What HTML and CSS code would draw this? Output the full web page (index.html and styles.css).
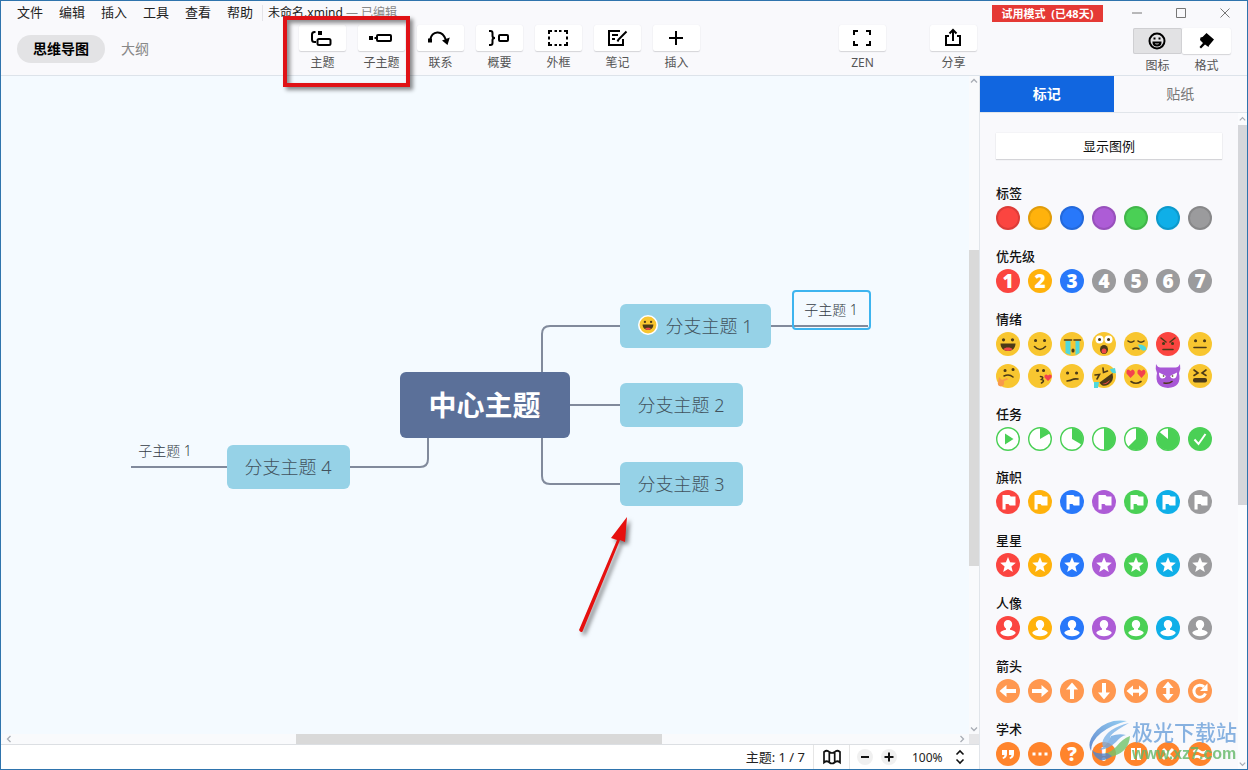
FILE: index.html
```
<!DOCTYPE html>
<html lang="zh-CN">
<head>
<meta charset="utf-8">
<title>未命名.xmind</title>
<link rel="stylesheet" href="styles.css">
</head>
<body>
<svg class="defs" aria-hidden="true">
  <symbol id="dot" viewBox="0 0 24 24"><circle cx="12" cy="12" r="12" fill="currentColor"/><circle cx="12" cy="12" r="11" fill="none" stroke="#000" stroke-opacity=".12" stroke-width="2"/></symbol>
  <symbol id="flag" viewBox="0 0 24 24"><circle cx="12" cy="12" r="12" fill="currentColor"/><path d="M6.500 5h7l1.200 1.600h4.800v8.900h-5.800l-1.200-1.600H9.600v5.600H6.500z" fill="#fff"/></symbol>
  <symbol id="star" viewBox="0 0 24 24"><circle cx="12" cy="12" r="12" fill="currentColor"/><path d="M12 4l2.100 5.300 5.700.4-4.400 3.700 1.400 5.500-4.800-3-4.800 3 1.400-5.500-4.400-3.700 5.700-.4z" fill="#fff"/></symbol>
  <symbol id="person" viewBox="0 0 24 24"><circle cx="12" cy="12" r="12" fill="currentColor"/><path d="M12 4c2.400 0 4.200 1.900 4.200 4.200 0 1.900-.9 3.500-2.200 4.400v1.200c3.200.4 5.200 1.600 5.800 3.200-1.800 2.300-4.600 3.300-7.800 3.300s-6-1-7.800-3.300c.6-1.600 2.600-2.800 5.800-3.200v-1.200c-1.300-.9-2.200-2.500-2.200-4.400C7.800 5.900 9.600 4 12 4z" fill="#fff"/></symbol>
  <symbol id="a-left" viewBox="0 0 24 24"><circle cx="12" cy="12" r="12" fill="currentColor"/><path d="M3.500 12l7-6v4H20v4h-9.500v4z" fill="#fff"/></symbol>
  <symbol id="a-both" viewBox="0 0 24 24"><circle cx="12" cy="12" r="12" fill="currentColor"/><path d="M2.500 12l6.500-5.500v3.700h6V6.500l6.500 5.500-6.500 5.500v-3.700H9v3.700z" fill="#fff"/></symbol>
  <symbol id="a-turn" viewBox="0 0 24 24"><circle cx="12" cy="12" r="12" fill="currentColor"/><path d="M17.500 14.500a6 6 0 1 1-1.500-6.700" fill="none" stroke="#fff" stroke-width="3"/><path d="M19.500 4.500V12H12z" fill="#fff"/></symbol>
  <symbol id="ring" viewBox="0 0 24 24"><circle cx="12" cy="12" r="11.300" fill="#fff" stroke="currentColor" stroke-width="1.400"/></symbol>
  <symbol id="face" viewBox="0 0 24 24"><circle cx="12" cy="12" r="12" fill="#f8c630"/></symbol>
  <symbol id="grin" viewBox="0 0 24 24"><circle cx="12" cy="12" r="12" fill="#f8c630"/><circle cx="7.500" cy="7.800" r="1.600" fill="#4b3a18"/><circle cx="16.500" cy="7.800" r="1.600" fill="#4b3a18"/><path d="M4.500 11.500h15c0 4.500-3 7.500-7.500 7.500s-7.500-3-7.500-7.500z" fill="#4b3a18"/><path d="M7.500 17.300c1-2.300 8-2.300 9 0-2.400 2.200-6.600 2.200-9 0z" fill="#f04848"/></symbol>
  <symbol id="chev" viewBox="0 0 10 10"><path d="M2 6.500l3-3 3 3" fill="none" stroke="#a8acb4" stroke-width="1.300"/></symbol>
</svg>

<div class="app">
  <header class="header">
    <div class="titlebar">
      <nav class="menu" aria-label="菜单">
        <button type="button">文件</button><button type="button">编辑</button><button type="button">插入</button><button type="button">工具</button><button type="button">查看</button><button type="button">帮助</button>
      </nav>
      <span class="doc-title">未命名.xmind <span class="doc-state">— 已编辑</span></span>
      <span class="trial">试用模式&nbsp; (已48天)</span>
      <div class="window-buttons">
        <button type="button" aria-label="最小化"><svg viewBox="0 0 12 12"><path d="M1 6h10" stroke="#777" fill="none"/></svg></button>
        <button type="button" aria-label="最大化"><svg viewBox="0 0 12 12"><path d="M1.500 1.500h9v9h-9z" stroke="#777" fill="none"/></svg></button>
        <button type="button" aria-label="关闭"><svg viewBox="0 0 12 12"><path d="M1.500 1.500l9 9m0-9l-9 9" stroke="#777" fill="none"/></svg></button>
      </div>
    </div>
    <div class="toolbar">
      <div class="views">
        <button type="button" class="view view-on">思维导图</button>
        <button type="button" class="view">大纲</button>
      </div>
      <div class="tools">
        <button type="button" class="tool"><span class="tool-box"><svg class="ico" viewBox="0 0 24 24"><path d="M5.500 6H4.500Q2 6 2 8.500v5Q2 16 4.500 16H6" /><rect x="7.500" y="13" width="13" height="6" rx="1.500"/><path class="solid" d="M8 5h4v4H8z"/></svg></span><span class="tool-name">主题</span></button>
        <button type="button" class="tool"><span class="tool-box"><svg class="ico" viewBox="0 0 24 24"><rect x="8" y="9" width="14" height="6" rx="1"/><path d="M5.500 12H8"/><path class="solid" d="M0 10h4v4H0z"/></svg></span><span class="tool-name">子主题</span></button>
        <button type="button" class="tool"><span class="tool-box"><svg class="ico" viewBox="0 0 24 24"><path d="M2 14C4 5 14 3 18 14"/><path class="solid" d="M0 12.500h4v4H0zM14 14.500l7.800-3-2.300 7.500z"/></svg></span><span class="tool-name">联系</span></button>
        <button type="button" class="tool"><span class="tool-box"><svg class="ico" viewBox="0 0 24 24"><path d="M2 5H3.500q2 0 2 2v3q0 2 2.500 2Q5.500 12 5.500 14v3q0 2-2 2H2"/><rect x="12" y="9" width="9" height="6" rx="1"/></svg></span><span class="tool-name">概要</span></button>
        <button type="button" class="tool"><span class="tool-box"><svg class="ico" viewBox="0 0 24 24"><path d="M3 8V5h3M8.500 5h2.500M13 5h2.500M18 5h3v3M21 10.500v3M21 16v3h-3M15.500 19H13M11 19H8.500M6 19H3v-3M3 13.500v-3"/></svg></span><span class="tool-name">外框</span></button>
        <button type="button" class="tool"><span class="tool-box"><svg class="ico" viewBox="0 0 24 24"><path d="M15 5H4v14h14v-6M7 9h6M7 13h3M21.500 5.500l-8 8-1 2"/></svg></span><span class="tool-name">笔记</span></button>
        <button type="button" class="tool"><span class="tool-box"><svg class="ico" viewBox="0 0 24 24"><path d="M12 5v14M5 12h14"/></svg></span><span class="tool-name">插入</span></button>
      </div>
      <div class="tools tools-end">
        <button type="button" class="tool"><span class="tool-box"><svg class="ico" viewBox="0 0 24 24"><path d="M4 9V5h4M16 5h4v4M20 15v4h-4M8 19H4v-4"/></svg></span><span class="tool-name">ZEN</span></button>
        <button type="button" class="tool"><span class="tool-box"><svg class="ico" viewBox="0 0 24 24"><path d="M8 10H5v9h14v-9h-3M12 15V5M8.500 7.500L12 4l3.500 3.500"/></svg></span><span class="tool-name">分享</span></button>
      </div>
      <div class="panels">
        <button type="button" class="panel-button"><span class="panel-box panel-on"><svg class="ico" viewBox="0 0 24 24"><circle cx="12" cy="12" r="7.500"/><path d="M8.500 13.500h7c0 4-7 4-7 0z"/><path class="solid" d="M8.500 8.500h2v2h-2zM13.500 8.500h2v2h-2z"/></svg></span><span class="tool-name">图标</span></button>
        <button type="button" class="panel-button"><span class="panel-box"><svg class="ico" viewBox="0 0 24 24"><path class="solid" d="M12.500 4l7.500 6.500-5 6-8-7zM6.500 8.500l2-.5 7 6.500-1 3.500-3.500-2.500-4 4-1.500-1.500 3.500-4-3-3z"/></svg></span><span class="tool-name">格式</span></button>
      </div>
    </div>
  </header>

  <div class="body">
    <main class="workspace">
      <div class="stage">
        <div class="canvas">
          <svg class="links" viewBox="0 0 960 650" aria-hidden="true">
            <path d="M541 300v-42q0-8 8-8h70M569 329h50M541 360v40q0 8 8 8h70M427 360v23q0 8-8 8h-70M226 391h-96M770 250h97"/>
          </svg>
          <div class="node center">中心主题</div>
          <div class="node branch b1"><svg class="node-mark" viewBox="-1 -1 26 26"><circle cx="12" cy="12" r="13" fill="#fff"/><circle cx="12" cy="12" r="11" fill="#f8c630"/><circle cx="8" cy="8" r="1.500" fill="#4b3a18"/><circle cx="16" cy="8" r="1.500" fill="#4b3a18"/><path d="M5 11.500h14c0 4.500-3 7-7 7s-7-2.500-7-7z" fill="#4b3a18"/><path d="M8 17c1-2 7-2 8 0-2 2-6 2-8 0z" fill="#f04848"/></svg>分支主题 1</div>
          <div class="node branch b2">分支主题 2</div>
          <div class="node branch b3">分支主题 3</div>
          <div class="node branch b4">分支主题 4</div>
          <div class="node leaf leaf-on">子主题 1</div>
          <div class="node leaf leaf-left">子主题 1</div>
          <svg class="pointer" viewBox="0 0 60 130" aria-hidden="true"><path d="M8 121L46 31l-6-2L56 8l-2 25-5-2L11.500 122.500q-2 1.500-3.500-1.500z"/></svg>
        </div>
        <div class="vbar"><svg class="chev"><use href="#chev"/></svg><div class="vthumb"></div><svg class="chev flip"><use href="#chev"/></svg></div>
      </div>
      <div class="hbar"><svg class="chev left"><use href="#chev"/></svg><div class="hthumb"></div><svg class="chev right"><use href="#chev"/></svg><div class="corner"></div></div>
      <footer class="status">
        <span class="count">主题: 1 / 7</span>
        <button type="button" class="map-button" aria-label="导航"><svg viewBox="0 0 20 16"><path d="M2 3q3-2.500 5.300 0Q10 5 12.700 3 15 .5 18 3v10.500q-3-2.500-5.300 0-2.700 2-5.400 0Q5 11 2 13.500zM7.300 3v10.500M12.700 3v10.500" fill="none" stroke="#111" stroke-width="1.700"/></svg></button>
        <div class="zoom">
          <button type="button" class="round" aria-label="缩小"><svg viewBox="0 0 16 16"><path d="M4 8h8" stroke="#111" stroke-width="2"/></svg></button>
          <button type="button" class="round" aria-label="放大"><svg viewBox="0 0 16 16"><path d="M3.500 8h9M8 3.500v9" stroke="#111" stroke-width="2"/></svg></button>
          <label class="zoom-level"><select aria-label="缩放比例"><option>100%</option></select><svg viewBox="0 0 10 16"><path d="M1.500 5.500L5 2l3.500 3.500M1.500 10.500L5 14l3.500-3.500" fill="none" stroke="#111" stroke-width="1.600"/></svg></label>
        </div>
      </footer>
    </main>

    <aside class="sidebar">
      <div class="tabs"><button type="button" class="tab tab-on">标记</button><button type="button" class="tab">贴纸</button></div>
      <div class="side-body">
        <div class="markers">
          <button type="button" class="legend">显示图例</button>
          <section><h2>标签</h2><div class="row">
            <button class="mk red" aria-label="红色标签"><svg><use href="#dot"/></svg></button><button class="mk amber" aria-label="黄色标签"><svg><use href="#dot"/></svg></button><button class="mk blue" aria-label="蓝色标签"><svg><use href="#dot"/></svg></button><button class="mk purple" aria-label="紫色标签"><svg><use href="#dot"/></svg></button><button class="mk green" aria-label="绿色标签"><svg><use href="#dot"/></svg></button><button class="mk cyan" aria-label="青色标签"><svg><use href="#dot"/></svg></button><button class="mk gray" aria-label="灰色标签"><svg><use href="#dot"/></svg></button>
          </div></section>
          <section><h2>优先级</h2><div class="row">
            <button class="mk num red"><span>1</span></button><button class="mk num amber"><span>2</span></button><button class="mk num blue"><span>3</span></button><button class="mk num gray"><span>4</span></button><button class="mk num gray"><span>5</span></button><button class="mk num gray"><span>6</span></button><button class="mk num gray"><span>7</span></button>
          </div></section>
          <section><h2>情绪</h2><div class="row">
            <button class="mk" aria-label="大笑"><svg><use href="#grin"/></svg></button>
            <button class="mk" aria-label="微笑"><svg><use href="#face"/><path class="ink eye" d="M7.500 8.500h.1M16.500 8.500h.1"/><path class="ink" d="M6.500 14.500q5.500 6 11 0"/></svg></button>
            <button class="mk" aria-label="大哭"><svg><use href="#face"/><path d="M5.500 9h5v14l-5-2zM15.500 9h4v12l-4 2z" fill="#4fd8dc"/><path class="ink" d="M4.500 8h7M14 8h6.500"/><path class="ink eye" d="M13 18v1"/></svg></button>
            <button class="mk" aria-label="惊讶"><svg><use href="#face"/><circle cx="7.500" cy="7.500" r="4" fill="#fff"/><circle cx="16.500" cy="7.500" r="4" fill="#fff"/><path class="ink eye" d="M7.500 7.500h.1M16.500 7.500h.1"/><ellipse cx="12" cy="17.500" rx="4" ry="4.500" fill="#4b3a18"/><ellipse cx="12" cy="19" rx="2.500" ry="2.500" fill="#f04848"/></svg></button>
            <button class="mk" aria-label="困倦"><svg><use href="#face"/><path class="ink" d="M4 9q3 2.500 6 0M14 9q3 2.500 6 0M9 17q3-2 6 0"/><path d="M14 12.500q8 0 8.500 5-4 3-7-1.500z" fill="#4fd8dc"/></svg></button>
            <button class="mk" aria-label="愤怒"><svg><circle cx="12" cy="12" r="12" fill="#fb4540"/><path class="ink" d="M5 6l5 4M19 6l-5 4M7 17.500h10"/><path class="ink eye" d="M7.500 11.500h.1M16.500 11.500h.1"/></svg></button>
            <button class="mk" aria-label="无语"><svg><use href="#face"/><path class="ink eye" d="M7.500 8.800h.1M16.500 8.800h.1"/><path class="ink" d="M6 15.500h12"/></svg></button>
            <button class="mk" aria-label="思考"><svg><use href="#face"/><path class="ink eye" d="M9 6.500h.1M17 5.500h.1"/><path class="ink" d="M8 12q5-2.500 9 1"/><path d="M3 13l3 3 5-2 1 1.500-4 1.500q1 5-3 5.500Q1 22 2 18z" fill="#f99a4a"/></svg></button>
            <button class="mk" aria-label="飞吻"><svg><use href="#face"/><path class="ink eye" d="M9.500 6.500h.1M15.500 6.500h.1"/><path class="ink" d="M12.500 12.500q4 .5 1 3 4 1 0 3.500"/><path d="M20 17l-3.500-3.500q-.5-3 2-3l1.500 1 1.500-1q3 0 2 3z" fill="#f3414e"/></svg></button>
            <button class="mk" aria-label="困惑"><svg><use href="#face"/><path class="ink eye" d="M7.500 9h.1M16.500 9h.1"/><path class="ink" d="M7 17q4-.5 5.500-1.500t5.500-.5"/></svg></button>
            <button class="mk" aria-label="笑哭"><svg><use href="#face"/><path class="ink" d="M3 11l4.500-.5L5 15M11 4l.5 4.500 4-1.500"/><path d="M20.500 9q2 8-4 11.500t-9-2z" fill="#4b3a18"/><path d="M10 20q5-1 8-4-2 5-8 4z" fill="#f04848"/><path d="M18 5l5-1 1 5q-5 1-6-4zM2 18l5 0-1 6H2z" fill="#4fd8dc"/></svg></button>
            <button class="mk" aria-label="喜爱"><svg><use href="#face"/><path d="M6.500 14L2.500 9.500q-.5-4 2-4L6.500 7l2-1.500q3 1 2 4.500zM17.500 14l-4-4.500q-.5-4 2-4l2 1.500 2-1.500q3 1 1.500 4.500z" fill="#f3414e"/><path class="ink" d="M7 17.500q5 3.500 10 0"/></svg></button>
            <button class="mk" aria-label="恶魔"><svg><path d="M0 0q2 4 5 3.500h14Q22 4 24 0q1 5-1 9 3 14-11 15Q-2 23 1 9-1 5 0 0z" fill="#a857d6"/><path d="M3 8.500l7 3.500q-1 3-4 2.500T3 8.500zM21 8.500L14 12q1 3 4 2.500t3-6z" fill="#fff"/><path class="ink" d="M7.500 12h.1M16.500 12h.1"/><path class="ink" d="M8 19q5 1 8-1.500"/></svg></button>
            <button class="mk" aria-label="痛苦"><svg><use href="#face"/><path class="ink" d="M6 6l4 3-4 2.500M18 6l-4 3 4 2.500"/><rect x="5" y="14" width="14" height="4.500" rx="2" fill="#4b3a18"/></svg></button>
          </div></section>
          <section><h2>任务</h2><div class="row">
            <button class="mk green" aria-label="开始"><svg><use href="#ring"/><path d="M9 6.500l8.500 5.500L9 17.500z" fill="currentColor"/></svg></button>
            <button class="mk green" aria-label="八分之一"><svg><use href="#ring"/><path d="M12 12V1a11 11 0 0 1 9.500 5.500z" fill="currentColor"/></svg></button>
            <button class="mk green" aria-label="四分之一"><svg><use href="#ring"/><path d="M12 12V1a11 11 0 0 1 9.500 16.500z" fill="currentColor"/></svg></button>
            <button class="mk green" aria-label="一半"><svg><use href="#ring"/><path d="M12 1a11 11 0 0 1 0 22z" fill="currentColor"/></svg></button>
            <button class="mk green" aria-label="八分之五"><svg><use href="#ring"/><path d="M12 12V1a11 11 0 1 1-7.800 18.800z" fill="currentColor"/></svg></button>
            <button class="mk green" aria-label="八分之七"><svg><use href="#ring"/><path d="M12 12V1A11 11 0 1 1 3.600 4.900z" fill="currentColor"/></svg></button>
            <button class="mk green" aria-label="完成"><svg><circle cx="12" cy="12" r="12" fill="currentColor"/><path d="M6.500 12.500l4 4.500L17.500 7" fill="none" stroke="#fff" stroke-width="2"/></svg></button>
          </div></section>
          <section><h2>旗帜</h2><div class="row">
            <button class="mk red" aria-label="红旗"><svg><use href="#flag"/></svg></button><button class="mk amber" aria-label="黄旗"><svg><use href="#flag"/></svg></button><button class="mk blue" aria-label="蓝旗"><svg><use href="#flag"/></svg></button><button class="mk purple" aria-label="紫旗"><svg><use href="#flag"/></svg></button><button class="mk green" aria-label="绿旗"><svg><use href="#flag"/></svg></button><button class="mk cyan" aria-label="青旗"><svg><use href="#flag"/></svg></button><button class="mk gray" aria-label="灰旗"><svg><use href="#flag"/></svg></button>
          </div></section>
          <section><h2>星星</h2><div class="row">
            <button class="mk red" aria-label="红星"><svg><use href="#star"/></svg></button><button class="mk amber" aria-label="黄星"><svg><use href="#star"/></svg></button><button class="mk blue" aria-label="蓝星"><svg><use href="#star"/></svg></button><button class="mk purple" aria-label="紫星"><svg><use href="#star"/></svg></button><button class="mk green" aria-label="绿星"><svg><use href="#star"/></svg></button><button class="mk cyan" aria-label="青星"><svg><use href="#star"/></svg></button><button class="mk gray" aria-label="灰星"><svg><use href="#star"/></svg></button>
          </div></section>
          <section><h2>人像</h2><div class="row">
            <button class="mk red" aria-label="红色人像"><svg><use href="#person"/></svg></button><button class="mk amber" aria-label="黄色人像"><svg><use href="#person"/></svg></button><button class="mk blue" aria-label="蓝色人像"><svg><use href="#person"/></svg></button><button class="mk purple" aria-label="紫色人像"><svg><use href="#person"/></svg></button><button class="mk green" aria-label="绿色人像"><svg><use href="#person"/></svg></button><button class="mk cyan" aria-label="青色人像"><svg><use href="#person"/></svg></button><button class="mk gray" aria-label="灰色人像"><svg><use href="#person"/></svg></button>
          </div></section>
          <section><h2>箭头</h2><div class="row">
            <button class="mk peach" aria-label="向左"><svg><use href="#a-left"/></svg></button><button class="mk peach" aria-label="向右"><svg class="turn-180"><use href="#a-left"/></svg></button><button class="mk peach" aria-label="向上"><svg class="turn-90"><use href="#a-left"/></svg></button><button class="mk peach" aria-label="向下"><svg class="turn-270"><use href="#a-left"/></svg></button><button class="mk peach" aria-label="左右"><svg><use href="#a-both"/></svg></button><button class="mk peach" aria-label="上下"><svg class="turn-90"><use href="#a-both"/></svg></button><button class="mk peach" aria-label="刷新"><svg><use href="#a-turn"/></svg></button>
          </div></section>
          <section><h2>学术</h2><div class="row">
            <button class="mk orange" aria-label="引用"><svg><circle cx="12" cy="12" r="12" fill="currentColor"/><path d="M6 8h5v4q0 4-4 5l-.5-1.500Q8.500 14.500 8.500 13H6zM13 8h5v4q0 4-4 5l-.5-1.500q2-1 2-2.500H13z" fill="#fff"/></svg></button>
            <button class="mk orange" aria-label="省略"><svg><circle cx="12" cy="12" r="12" fill="currentColor"/><path d="M4.500 10.500h3v3h-3zM10.500 10.500h3v3h-3zM16.500 10.500h3v3h-3z" fill="#fff"/></svg></button>
            <button class="mk num orange"><span>?</span></button>
            <button class="mk num orange"><span>!</span></button>
            <button class="mk orange" aria-label="暂停"><svg><circle cx="12" cy="12" r="12" fill="currentColor"/><path d="M7 6h4v12H7zM13 6h4v12h-4z" fill="#fff"/></svg></button>
            <button class="mk orange" aria-label="错误"><svg><circle cx="12" cy="12" r="12" fill="currentColor"/><path d="M7 7l10 10M17 7L7 17" stroke="#fff" stroke-width="3"/></svg></button>
            <button class="mk orange" aria-label="约等于"><svg><circle cx="12" cy="12" r="12" fill="currentColor"/><path d="M5.500 10q3-3 6.500-.5t6.500-.5M5.500 16q3-3 6.500-.5t6.500-.5" fill="none" stroke="#fff" stroke-width="2.500"/></svg></button>
          </div></section>
        </div>
        <div class="side-bar"><svg class="chev"><use href="#chev"/></svg><div class="side-thumb"></div><svg class="chev flip"><use href="#chev"/></svg></div>
      </div>
    </aside>
  </div>

  <div class="highlight"></div>
  <div class="watermark">
    <svg viewBox="0 0 42 44" aria-hidden="true"><defs><linearGradient id="wg" x1="0" y1="1" x2="1" y2="0"><stop offset="0" stop-color="#3e6fc4"/><stop offset="1" stop-color="#7cc4f0"/></linearGradient></defs><path d="M38 2Q20-1 8 11-3 23 2 32q0-10 10-18T38 2z" fill="url(#wg)"/><path d="M40 4Q19 9 14 21q-2 6 2 9 2-6 7-10Q15 18 40 4z" fill="#7db4e8"/><path d="M22 17q8-3 15-1Q32 17 27 23q-7 7-17 8 9-5 12-14z" fill="#6fa8e2"/><path d="M41 17q-1 15-16 20-9 3-16-1 10 0 18-8Q33 20 41 17z" fill="#72c46c"/><path d="M3 31q5 5 15 3l5 3q-6 5-12 4-6-3-8-10z" fill="#4e86cf"/></svg>
    <div><div class="wm-name">极光下载站</div><div class="wm-url">www.xz7.com</div></div>
  </div>
</div>
</body>
</html>
```
FILE: styles.css
```
* { box-sizing: border-box; }
body {
  margin: 0;
  font-family: "Noto Sans", "Noto Sans CJK SC", sans-serif;
  font-size: 13px;
  color: #222;
}
button, select {
  margin: 0;
  padding: 0;
  border: 0;
  background: none;
  font: inherit;
  color: inherit;
}
svg { display: block; }
.defs { position: absolute; width: 0; height: 0; }

.app {
  position: relative;
  display: flex;
  flex-direction: column;
  height: 100vh;
  border: 1px solid #2f74ad;
  background: #f9f9fc;
  overflow: hidden;
}

/* Header */
.header { border-bottom: 1px solid #dde3ea; }
.titlebar { display: flex; height: 24px; padding-left: 16px; }
.menu { display: flex; gap: 16px; padding-right: 9px; }
.menu button { height: 22px; line-height: 20px; }
.doc-title {
  align-self: flex-start;
  margin-top: 4px;
  line-height: 16px;
  font-size: 12px;
  padding-left: 5px;
  border-left: 1px solid #e3e3e8;
}
.doc-state { color: #888; }
.trial {
  margin: 4px 28px 0 auto;
  width: 111px;
  height: 17px;
  background: #e53935;
  color: #fff;
  font-size: 11px;
  font-weight: 700;
  line-height: 17px;
  text-align: center;
}
.window-buttons { display: flex; gap: 32px; padding-right: 16px; }
.window-buttons svg { width: 12px; height: 12px; }
.toolbar { display: flex; align-items: flex-start; height: 50px; padding: 0 16px; }
.views { display: flex; gap: 16px; padding-top: 10px; width: 282px; }
.view { height: 28px; padding-bottom: 2px; font-size: 14px; color: #888; }
.view-on {
  width: 88px;
  border-radius: 14px;
  background: #e3e3e5;
  color: #000;
  font-weight: 700;
}
.tools { display: flex; gap: 12px; }
.tools-end { gap: 44px; margin-left: auto; }
.tool { width: 47px; }
.tool-box, .panel-box {
  display: flex;
  align-items: center;
  height: 26px;
  padding-left: 11px;
  background: #fff;
  border-radius: 2px;
  box-shadow: 0 1px 1px #d4d4d8, 0 0 1px #e4e4e8;
}
.panel-box { padding-left: 12px; }
.tool-name {
  display: block;
  margin-top: 4px;
  font-size: 12px;
  line-height: 16px;
  color: #555;
  white-space: nowrap;
}
.ico { width: 24px; height: 24px; fill: none; stroke: #000; stroke-width: 2; }
.solid { fill: #000; stroke: none; }
.panels { display: flex; margin-left: 156px; padding-top: 3px; }
.panel-button { width: 49px; }
.panel-on { background: #e2e2e4; box-shadow: inset 0 0 0 1px #cfcfd2; }

/* Workspace */
.body { display: flex; flex: 1; min-height: 0; }
.workspace { flex: 1; min-width: 0; display: flex; flex-direction: column; }
.stage { flex: 1; min-height: 0; display: flex; }
.canvas { position: relative; flex: 1; min-width: 0; overflow: hidden; background: #f4faff; }
.chev { width: 10px; height: 10px; flex: none; }
.flip { transform: rotate(180deg); margin-top: auto; }
.left { transform: rotate(-90deg); }
.right { transform: rotate(90deg); margin-left: auto; }
.vbar { width: 10px; display: flex; flex-direction: column; background: #f9fafc; }
.vthumb { height: 48%; margin-top: 164px; background: #d9d9d9; }
.hbar {
  display: flex;
  align-items: center;
  height: 11px;
  padding-left: 3px;
  background: #f9fafc;
  border-bottom: 1px solid #dcdfe3;
}
.hthumb { width: 366px; height: 10px; margin-left: 282px; background: #d9d9d9; }
.corner { width: 10px; height: 10px; margin-left: 2px; background: #e6e6e8; }

.links {
  position: absolute;
  left: 0;
  top: 0;
  width: 960px;
  height: 650px;
  fill: none;
  stroke: #818a9c;
  stroke-width: 2;
}
.node {
  position: absolute;
  display: flex;
  align-items: center;
  justify-content: center;
  padding: 0 1px 2px 0;
  white-space: nowrap;
  border-radius: 6px;
}
.center {
  left: 399px;
  top: 296px;
  width: 170px;
  height: 66px;
  background: #5b7099;
  color: #fff;
  font-size: 28px;
  font-weight: 700;
}
.branch {
  width: 123px;
  height: 44px;
  background: #96d2e7;
  color: #42525e;
  font-size: 18px;
  font-weight: 300;
}
.b1 { left: 619px; top: 228px; width: 151px; gap: 8px; }
.b2 { left: 619px; top: 307px; }
.b3 { left: 619px; top: 386px; }
.b4 { left: 226px; top: 369px; }
.node-mark { width: 20px; height: 20px; }
.leaf { width: 79px; height: 40px; font-size: 14px; font-weight: 300; color: #333a44; }
.leaf-on { left: 791px; top: 214px; border: 2px solid #3db4ef; border-radius: 4px; }
.leaf-left { left: 125px; top: 355px; }
.pointer {
  position: absolute;
  left: 570px;
  top: 433px;
  width: 60px;
  height: 130px;
  fill: #e6100f;
  filter: drop-shadow(3px 3px 2px rgba(0, 0, 0, 0.5));
}

/* Status bar */
.status { display: flex; align-items: center; height: 24px; background: #fff; }
.count { margin-left: auto; padding: 0 8px 2px 0; }
.map-button {
  display: flex;
  align-items: center;
  justify-content: center;
  width: 37px;
  height: 24px;
  border: solid #e6e6e6;
  border-width: 0 1px;
}
.map-button svg { width: 20px; height: 16px; }
.zoom { display: flex; align-items: center; gap: 8px; padding: 0 14px 0 7px; }
.round { width: 16px; height: 16px; border-radius: 8px; background: #f0f0f0; }
.zoom-level { display: flex; align-items: center; gap: 11px; padding-left: 7px; }
.zoom-level select { appearance: none; width: 32px; font-size: 12px; }
.zoom-level svg { width: 10px; height: 16px; }

/* Sidebar */
.sidebar {
  display: flex;
  flex-direction: column;
  width: 268px;
  border-left: 1px solid #e1e5ea;
}
.tabs { display: flex; height: 37px; border-bottom: 1px solid #e1e5ea; }
.tab { flex: 1; padding-bottom: 2px; font-size: 14px; color: #777; }
.tab-on { background: #1166e0; color: #fff; font-weight: 700; height: 36px; }
.side-body { flex: 1; min-height: 0; display: flex; overflow: hidden; }
.markers { flex: 1; padding: 20px 16px 0; overflow: hidden; }
.legend {
  width: 100%;
  height: 26px;
  margin-bottom: 24px;
  padding-bottom: 2px;
  background: #fff;
  box-shadow: 0 1px 1px #d4d4d8, 0 0 1px #dcdce0;
  color: #111;
}
.markers section { margin-bottom: 16px; }
.markers h2 {
  margin: 0 0 3px;
  font-size: 13px;
  line-height: 20px;
  font-weight: 500;
  color: #111;
}
.row { display: grid; grid-template-columns: repeat(7, 24px); gap: 8px; }
.mk { width: 24px; height: 24px; }
.mk svg { width: 24px; height: 24px; overflow: visible; }
.ink { fill: none; stroke: #4b3a18; stroke-width: 1.6; stroke-linecap: round; }
.eye { stroke-width: 3; }
.num {
  border-radius: 12px;
  background: currentColor;
  font: 800 19px/24px "Open Sans", sans-serif;
}
.num span { display: block; color: #fff; }
.red { color: #fb4540; }
.amber { color: #ffb20c; }
.blue { color: #2878fa; }
.purple { color: #ad5cd6; }
.green { color: #4ad055; }
.cyan { color: #0fafe8; }
.gray { color: #9b9b9d; }
.peach { color: #ff9850; }
.orange { color: #ff842c; }
.turn-90 { transform: rotate(90deg); }
.turn-180 { transform: rotate(180deg); }
.turn-270 { transform: rotate(270deg); }
.side-bar {
  display: flex;
  flex-direction: column;
  width: 9px;
  padding-top: 1px;
  background: #fbfcfe;
}
.side-thumb { height: 58%; margin-top: 1px; background: #d5d6da; }
.side-bar .chev { width: 9px; }

/* Overlays */
.highlight {
  position: absolute;
  left: 282px;
  top: 15px;
  width: 127px;
  height: 71px;
  border: 4px solid #e01216;
  box-shadow: 3px 3px 4px rgba(0, 0, 0, 0.45), inset 3px 3px 4px rgba(0, 0, 0, 0.45);
  pointer-events: none;
}
.watermark {
  position: absolute;
  right: 10px;
  bottom: 6px;
  display: flex;
  gap: 1px;
  opacity: 0.8;
  pointer-events: none;
}
.watermark svg { width: 42px; height: 44px; }
.wm-name { font-size: 21px; line-height: 26px; font-weight: 500; color: #6ba0da; }
.wm-url {
  font: 700 16px/18px "Liberation Sans", sans-serif;
  color: #62b866;
}
```
